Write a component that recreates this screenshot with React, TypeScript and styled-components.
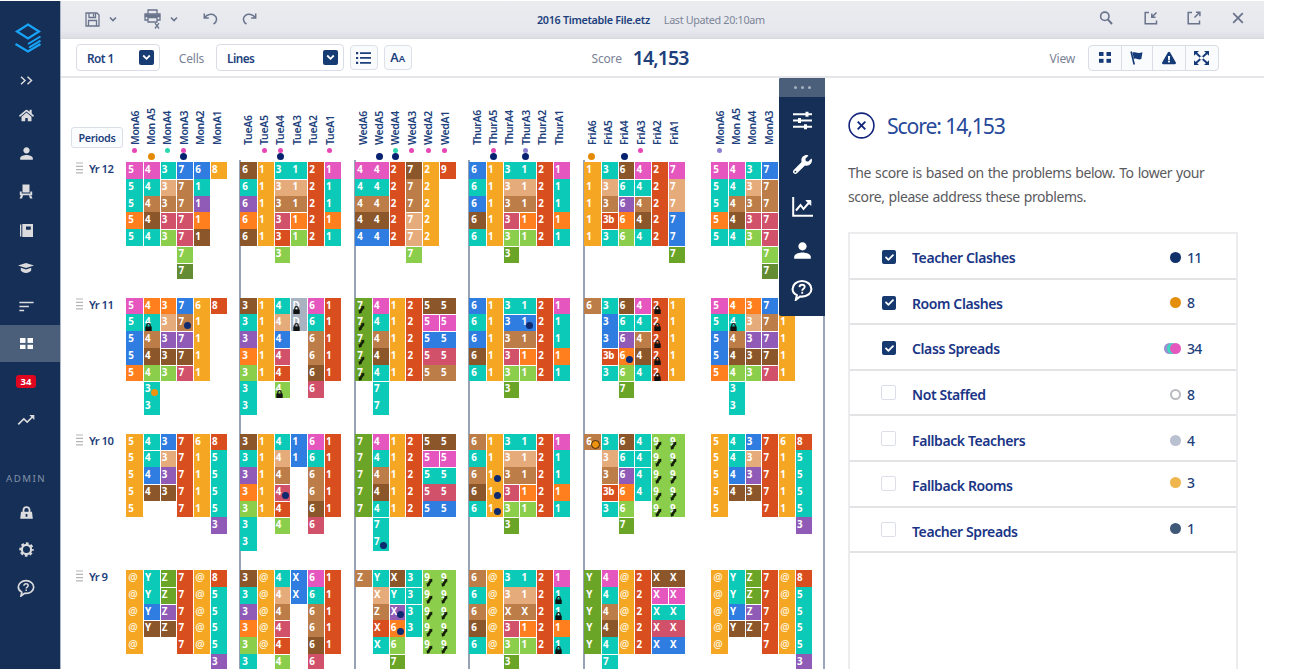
import React from "react";
import styled, { createGlobalStyle, css } from "styled-components";
import { FaHome, FaWrench, FaCheck, FaExclamationTriangle } from "react-icons/fa";
import { MdPerson, MdSort, MdTrendingUp } from "react-icons/md";

const GlobalStyle = createGlobalStyle`
  * { box-sizing: border-box; }
  html, body { margin: 0; padding: 0; background: #fff; }
  body { font-family: "Noto Sans", "Open Sans", sans-serif; overflow: hidden; }
`;

const NAVY = "#152f57";
const INK = "#1d3f7c";
const SLATE = "#4b5f7b";
const MUTED = "#7a8296";

const fills: Record<string, string> = {
  p: "#e557be", t: "#0bcbb8", o: "#ff7f1f", b: "#2f7de1", a: "#f5a623",
  r: "#d94e1f", s: "#e6ab7b", n: "#bc7d49", d: "#8b572a", v: "#8f5bb6",
  c: "#d1506a", g: "#8bce4c", G: "#6aa527", D: "#648d33", e: "#a9b2c1",
};
const dotFills: Record<string, string> = {
  pink: "#e845b5", teal: "#2bd9b0", violet: "#8e7fd0", navy: "#06216f", orange: "#e38b06",
};

/* ---------- shell ---------- */
const Shell = styled.div`
  display: flex;
  width: 1264px;
  height: 669px;
  padding-top: 1px;
  overflow: hidden;
`;
const Sidebar = styled.nav`
  flex: none;
  width: 61px;
  height: 668px;
  background: ${NAVY};
  border-right: 1px solid #aeb6c6;
  display: flex;
  flex-direction: column;
  color: #dcdcde;
`;
const NavItem = styled.div<{ $h: number; $active?: boolean }>`
  flex: none;
  height: ${(p) => p.$h}px;
  padding-right: 8px;
  display: flex;
  align-items: center;
  justify-content: center;
  ${(p) => p.$active && css`background: ${SLATE}; color: #fff;`}
  svg { display: block; }
`;
const Logo = styled(NavItem)`padding: 8px 4px 0 0;`;
const Alert = styled.span`
  background: #e0061f;
  color: #fff;
  border-radius: 3px;
  width: 20px;
  height: 13px;
  font-size: 9.5px;
  font-weight: 700;
  line-height: 13px;
  text-align: center;
`;
const NavHeading = styled.span`
  height: 37px;
  margin-top: 21px;
  padding-left: 6px;
  color: #8391a8;
  font-size: 9.7px;
  letter-spacing: 1.5px;
  line-height: 38px;
`;
const Main = styled.main`flex: 1; min-width: 0; display: flex; flex-direction: column;`;

/* ---------- top bar ---------- */
const TopBar = styled.header`
  flex: none;
  height: 38px;
  display: flex;
  align-items: center;
  padding: 0 18px 1px 24px;
  background: linear-gradient(#ebecf0, #e6e8ed 80%, #dcdee4);
  border-bottom: 1px solid #d7d9df;
  color: #69738c;
  svg { display: block; }
`;
const IconSlot = styled.span<{ $w: number; $up?: boolean }>`
  flex: none;
  width: ${(p) => p.$w}px;
  padding-bottom: ${(p) => (p.$up ? 2 : 0)}px;
  display: flex;
`;
const FileInfo = styled.div`
  flex: 1;
  display: flex;
  gap: 14px;
  padding-left: 272px;
  font-size: 10.8px;
  white-space: nowrap;
`;
const FileName = styled.span`color: ${INK}; font-weight: 600; letter-spacing: -0.32px;`;
const Updated = styled.span`color: #7c8598; letter-spacing: -0.34px;`;

/* ---------- tool bar ---------- */
const ToolBar = styled.div`
  flex: none;
  height: 39px;
  display: flex;
  align-items: center;
  padding: 0 45px 0 15px;
  background: #fff;
  border-bottom: 2px solid #e4e6ea;
  font-size: 12px;
`;
const Select = styled.div<{ $w: number }>`
  width: ${(p) => p.$w}px;
  height: 27px;
  display: flex;
  align-items: center;
  justify-content: space-between;
  padding: 1px 5px 0 10px;
  border: 1px solid #d9dce5;
  border-radius: 4px;
  color: ${INK};
  font-size: 11.8px;
  font-weight: 600;
  letter-spacing: -0.55px;
`;
const SelectArrow = styled.span`
  width: 15px;
  height: 15px;
  margin-top: -1px;
  border-radius: 2px;
  background: #173c73;
  display: flex;
  align-items: center;
  justify-content: center;
`;
const Caption = styled.span<{ $ml?: number; $mr?: number }>`
  color: ${MUTED};
  letter-spacing: -0.2px;
  margin: 2px ${(p) => p.$mr ?? 0}px 0 ${(p) => p.$ml ?? 0}px;
`;
const SquareButton = styled.div`
  width: 28px;
  height: 25px;
  margin-left: 6px;
  border: 1px solid #dde0e8;
  border-radius: 4px;
  background: #fafbfd;
  color: ${INK};
  display: flex;
  align-items: center;
  justify-content: center;
`;
const CaseGlyph = styled.span<{ $s: number }>`font-size: ${(p) => p.$s}px; font-weight: 600;`;
const CasePair = styled.span`display: flex; align-items: baseline; line-height: 16px; padding-top: 2px;`;
const BigScore = styled.span`
  color: ${INK};
  font-size: 19.5px;
  font-weight: 600;
  letter-spacing: -0.9px;
  line-height: 24px;
`;
const ViewGroup = styled.div`
  display: flex;
  height: 26px;
  border: 1px solid #dadde6;
  border-radius: 4px;
  background: #fafbfd;
  color: #153a78;
`;
const ViewButton = styled.div<{ $w: number }>`
  width: ${(p) => p.$w}px;
  display: flex;
  align-items: center;
  justify-content: center;
  & + & { border-left: 1px solid #dadde6; }
`;

/* ---------- timetable ---------- */
const Body = styled.div`flex: 1; display: flex; min-height: 0; position: relative;`;
const Timetable = styled.section`
  flex: none;
  width: 764px;
  display: flex;
  overflow: hidden;
  border-right: 2px solid #9aa5b9;
`;
const LabelColumn = styled.div`flex: none; width: 65px; padding-top: 49px;`;
const PeriodsButton = styled.div`
  width: 52px;
  height: 21px;
  margin: 0 0 13px 10px;
  border: 1px solid #dadee8;
  border-radius: 3px;
  background: #fbfcfe;
  color: ${INK};
  font-size: 10.8px;
  font-weight: 600;
  letter-spacing: -0.38px;
  line-height: 19px;
  text-align: center;
`;
const YearLabel = styled.div<{ $h: number }>`
  height: ${(p) => p.$h}px;
  padding-left: 15px;
  display: flex;
  align-items: flex-start;
  gap: 6px;
  color: ${INK};
  font-size: 11.3px;
  font-weight: 600;
  letter-spacing: -0.6px;
  line-height: 15px;
  svg { flex: none; margin-top: 1px; }
`;
const Day = styled.div<{ $w: number }>`flex: none; width: ${(p) => p.$w}px;`;
const DayHeader = styled.div`
  height: 82px;
  display: flex;
  padding-left: 0.5px;
`;
const PeriodHead = styled.div`
  width: 16.4px;
  height: 82px;
  display: flex;
  flex-direction: column;
  align-items: center;
`;
const PeriodName = styled.span`
  height: 67px;
  writing-mode: vertical-rl;
  transform: rotate(180deg);
  color: ${INK};
  font-size: 10.5px;
  font-weight: 600;
  letter-spacing: -0.35px;
  line-height: 16px;
  white-space: nowrap;
`;
const SmallDot = styled.i<{ $c?: string }>`
  flex: none;
  width: 5px;
  height: 5px;
  margin-top: 3px;
  border-radius: 50%;
  background: ${(p) => p.$c ?? "transparent"};
`;
const LargeDot = styled.i<{ $c: string }>`
  flex: none;
  width: 7px;
  height: 7px;
  border-radius: 50%;
  background: ${(p) => p.$c};
`;
const DayBody = styled.div<{ $line: boolean }>`
  height: 520px;
  padding-top: 2px;
  border-left: ${(p) => (p.$line ? "2px solid #98a2b5" : "0")};
`;
const Block = styled.div<{ $h: number; $pull: boolean }>`
  height: ${(p) => p.$h}px;
  margin-left: ${(p) => (p.$pull ? "-1px" : "0")};
  display: flex;
  align-items: flex-start;
`;
const Column = styled.div`flex: none; width: 16.75px;`;
const Cell = styled.div<{ $fill: string; $left: boolean; $top: boolean; $at: boolean }>`
  position: relative;
  height: 16.75px;
  padding-left: ${(p) => (p.$left ? 1.2 : 2.2)}px;
  background: ${(p) => p.$fill};
  border: 0 solid #fff;
  border-left-width: ${(p) => (p.$left ? 1 : 0)}px;
  border-top-width: ${(p) => (p.$top ? 1 : 0)}px;
  color: ${(p) => (p.$at ? "#fff0d2" : "#fff")};
  font-size: ${(p) => (p.$at ? 10.5 : 9.8)}px;
  font-weight: ${(p) => (p.$at ? 600 : 700)};
  line-height: ${(p) => (p.$top ? 13 : 15)}px;
  letter-spacing: -0.3px;
  white-space: nowrap;
`;
const ClashDot = styled.i<{ $kind: "N" | "O" | "Q" }>`
  position: absolute;
  left: 7px;
  bottom: 2px;
  width: 7px;
  height: 7px;
  border-radius: 50%;
  background: ${(p) => (p.$kind === "N" ? "#0f2a6e" : "#ee9310")};
  ${(p) => p.$kind === "Q" && css`border: 1.5px solid #4a2c0c; width: 9px; height: 9px; bottom: 1px;`}
`;
const Mark = styled.svg<{ $x: number }>`position: absolute; left: ${(p) => p.$x}px; bottom: 0;`;

/* ---------- floating tools ---------- */
const ToolDock = styled.aside`
  position: absolute;
  left: 718px;
  top: 0;
  width: 46px;
  height: 238px;
  background: ${NAVY};
  border-radius: 2px 0 0 2px;
  color: #fff;
  display: flex;
  flex-direction: column;
  svg { display: block; }
`;
const DockHandle = styled.div`
  height: 19px;
  background: ${SLATE};
  border-radius: 2px 0 0 0;
  display: flex;
  align-items: center;
  justify-content: center;
  gap: 4px;
  i { width: 3px; height: 3px; border-radius: 50%; background: #a6b1c1; }
`;
const DockItem = styled.div<{ $h: number }>`
  height: ${(p) => p.$h}px;
  display: flex;
  align-items: center;
  justify-content: center;
`;

/* ---------- score panel ---------- */
const Panel = styled.section`
  flex: 1;
  padding: 33px 26px 0 23px;
  display: flex;
  flex-direction: column;
`;
const PanelTitle = styled.h1`
  margin: 0;
  height: 28px;
  display: flex;
  align-items: center;
  gap: 12px;
  color: #27499a;
  font-size: 21.2px;
  font-weight: 400;
  letter-spacing: -1.12px;
  line-height: 24px;
  white-space: nowrap;
`;
const TitleText = styled.span`padding-top: 1px;`;
const Intro = styled.p`
  margin: 22px 0 24px;
  color: #5a5a5e;
  font-size: 14px;
  line-height: 23.5px;
  letter-spacing: -0.42px;
  word-spacing: 0.8px;
  white-space: nowrap;
`;
const Problems = styled.div`
  flex: 1;
  width: 390px;
  border: 1px solid #ececef;
  border-width: 2px 2px 0;
`;
const Problem = styled.div`
  height: 45.6px;
  display: flex;
  align-items: center;
  padding: 4px 0 0 31px;
  border-bottom: 2px solid #e3e3e5;
`;
const CheckBox = styled.span<{ $on: boolean }>`
  width: ${(p) => (p.$on ? 14 : 15)}px;
  height: ${(p) => (p.$on ? 14 : 15)}px;
  margin: ${(p) => (p.$on ? "0 16px 1px 1px" : "0 16px 4px 0")};
  display: flex;
  align-items: center;
  justify-content: center;
  color: #fff;
  border-radius: 2px;
  background: ${(p) => (p.$on ? "#163a70" : "#fff")};
  border: ${(p) => (p.$on ? "0" : "1px solid #dcdfe9")};
`;
const ProblemName = styled.span`
  flex: 1;
  color: #1a3586;
  font-size: 14px;
  font-weight: 600;
  letter-spacing: -0.4px;
`;
const Tally = styled.span<{ $lift: number }>`
  display: flex;
  align-items: center;
  padding-bottom: ${(p) => p.$lift}px;
`;
const Dots = styled.span`
  display: flex;
  width: 28px;
  justify-content: flex-end;
  margin-right: 6px;
`;
const Dot = styled.i<{ $c: string; $ring?: boolean }>`
  width: 11px;
  height: 11px;
  margin-left: -8px;
  border-radius: 50%;
  background: ${(p) => (p.$ring ? "#fff" : p.$c)};
  border: ${(p) => (p.$ring ? "2px solid " + p.$c : "0")};
`;
const Count = styled.span`
  width: 49px;
  color: ${INK};
  font-size: 14px;
  font-weight: 500;
  letter-spacing: -0.7px;
`;

/* ---------- data ---------- */
/* A cell is a fill letter, its text, then optional marks after ":"
   ^ rule above, ~ joined to the left, L lock, S substitute, N/O/Q clash dots. */
type Grid = string[];
const five = (s: string) => Array(5).fill(s).join(" ");

const mon12: Grid = ["p5 t5 t5 o5 t5", "p4 t4 n4 d4 t4", "t3 s3:^ n3 c3:^ g3:^", "b7 n7:^ n7 c7:^ c7:^ g7:^ D7:^", "b6 t1 v1 o1 d1", "a8"];
const mon11 = (dots: boolean): Grid => [
  "p5 t5 b5 b5 o5", `o4 t4:L n4 d4 g4 t3:^${dots ? "O" : ""} t3`, "o3 s3 v3:^ d3:^ g3:^",
  `b7 n7${dots ? ":N" : ""} v7:^ d7:^ c7:^`, "a6 a1 a1 a1 a1", "r8"];
const mon10: Grid = [five("a5"), "t4 t4:^ b4 d4:^", "b3 s3:^ v3 d3:^", five("r7"), "a6 a1 a1 a1 a1", "r8 t5 t5 t5 t5 v3"];
const mon9: Grid = [five("a@"), "tY tY bY dY:^", "GZ GZ:^ vZ:^ dZ:^", five("r7"), five("a@"), "r8 t5 t5 t5 t5 v3"];
const tueC1 = "d3 t3 v3 o3 g3 t3";
const tueC5 = "p6 t6 n6 n6 d6 c6";
const thuC6 = "p1 t1 t1 o1 t1";

interface Head { name: string; small?: string; large?: string }
interface DayData { id: string; width: number; line: boolean; heads: Head[]; years: Grid[] }

const days: DayData[] = [
  {
    id: "mon", width: 113, line: false,
    heads: [{ name: "MonA6", small: "pink" }, { name: "Mon A5", large: "orange" }, { name: "MonA4", small: "teal" },
      { name: "MonA3", small: "pink", large: "navy" }, { name: "MonA2" }, { name: "MonA1" }],
    years: [mon12, mon11(true), mon10, mon9],
  },
  {
    id: "tue", width: 115, line: true,
    heads: [{ name: "TueA6" }, { name: "TueA5", small: "pink" }, { name: "TueA4", small: "pink", large: "navy" },
      { name: "TueA3" }, { name: "TueA2" }, { name: "TueA1", small: "pink" }],
    years: [
      ["d6 t6 v6 o6 d6", five("a1"), "t3 s3:^ n3 c3:^ r3:^ g3:^", "t1:~ s1:~^ n1:~ o1:^ g1:^", five("r2"), thuC6],
      [`${tueC1} t3`, five("a1"), "t4 s4 b4 c4:^ r4:^ g4:^L", "eD:L eD:L", tueC5, five("r1")],
      [`${tueC1} t3`, five("a1"), "t4 s4 n4 c4:^N r4:^ g4:^", "b1 b1", tueC5, five("r1")],
      [tueC1, five("a@"), "t4 s4 n4 c4:^ r4:^ g4:^", "bX bX", tueC5, five("r1")],
    ],
  },
  {
    id: "wed", width: 114, line: true,
    heads: [{ name: "WedA6" }, { name: "WedA5", large: "navy" }, { name: "WedA4", small: "teal", large: "navy" },
      { name: "WedA3", small: "pink" }, { name: "WedA2", small: "pink" }, { name: "WedA1", small: "pink" }],
    years: [
      ["p4 t4 n4 d4 b4", "p4:~ t4:~ n4:~ d4:~ b4:~", five("r2"), "d7 n7 n7 s7:^ s7:^ g7:^", five("a2"), "r9"],
      [five("G7:S"), "p4 t4 n4 d4 t4 t7:^ t7", five("a1"), five("r2"), "d5 p5:^ b5:^ c5 n5", "d5:~ p5:^ b5:~^ c5:~ n5:~"],
      [five("G7"), "p4 t4 n4 d4 t4 t7:^ t7:N", five("a1"), five("r2"), "d5 p5:^ t5:^ c5 b5", "d5:~ p5:^ t5:~^ c5:~ b5:~"],
      ["nZ", "tY sX nZ rX tX", "dX tY:^ vX:^N o6:N g6 G7:^", "t3 t3:^ t3:^ t3", five("g9:S"), five("g9:~S")],
    ],
  },
  {
    id: "thu", width: 115, line: true,
    heads: [{ name: "ThurA6" }, { name: "ThurA5", small: "pink", large: "navy" }, { name: "ThurA4" },
      { name: "ThurA3", small: "violet", large: "navy" }, { name: "ThurA2" }, { name: "ThurA1" }],
    years: [
      ["b6 t6 b6 d6 t6", five("a1"), "t3 s3 n3 c3:^ g3:^ G3:^", "t1:~ s1:~ n1:~ o1:^ g1:^", five("r2"), thuC6],
      ["b6 t6 b6 d6 t6", five("a1"), "t3 b3:^ n3 c3:^ g3:^ G3:^", "t1:~ b1:~^N n1:~ o1:^ g1:^", five("r2"), thuC6],
      ["n6 t6 n6 d6 t6", "a1 a1 a1:N a1:N a1:N", "t3 s3:^ n3 c3:^ g3:^ G3:^", "t1:~ s1:~^ n1:~ o1:^ g1:^", five("r2"), thuC6],
      ["n6 t6 n6 d6 t6", five("a@"), "t3 s3 nX c3:^ g3:^ G3:^", "t1:~ s1:~ nX:~ o1:^ g1:^", five("r2"), "p1 t1:L t1:L o1 t1:L"],
    ],
  },
  {
    id: "fri", width: 128, line: true,
    heads: [{ name: "FriA6", large: "orange" }, { name: "FriA5" }, { name: "FriA4", large: "navy" },
      { name: "FriA3", small: "pink" }, { name: "FriA2" }, { name: "FriA1" }],
    years: [
      [five("a1"), "t3 s3 n3 r3b:^ t3:^", "d6 t6:^ v6:^ o6 g6", "p4 t4:^ n4:^ d4 t4", five("r2"), "p7 s7 s7 b7 b7 G7:^"],
      ["n6", "t3 b3 b3 r3b:^ t3:^", "d6 t6:^ v6:^ o6:N g6 G7:^", "p4 t4:^ n4:^ d4 t4", five("r2:L"), five("a1")],
      ["n6:Q", "t3 s3 n3 r3b:^ t3:^", "d6 t6:^ v6:^ o6 g6 G7:^", "t4 t4:^ t4:^ t4", five("g9:S"), five("g9:~S")],
      [five("GY"), "p4 t4 n4 d4 t4 t7:^", five("a@"), five("r2"), "dX pX:^ tX:^ cX bX", "dX:~ pX:^ tX:~^ cX:~ bX:~"],
    ],
  },
  {
    id: "mon-b", width: 114, line: false,
    heads: [{ name: "MonA6", small: "violet" }, { name: "Mon A5" }, { name: "MonA4" }, { name: "MonA3" }],
    years: [mon12.slice(0, 4), mon11(false).slice(0, 5), mon10, mon9],
  },
];
const yearHeights = [135.5, 136, 136.5, 136];
const yearNames = ["Yr 12", "Yr 11", "Yr 10", "Yr 9"];

const problems = [
  { name: "Teacher Clashes", on: true, dots: ["#12306a"], count: 11, lift: 1 },
  { name: "Room Clashes", on: true, dots: ["#e38f0c"], count: 8, lift: 1 },
  { name: "Class Spreads", on: true, dots: ["#9a8fd0", "#3fd8c0", "#e657bd"], count: 34, lift: 1 },
  { name: "Not Staffed", on: false, dots: ["#b9bbc0"], ring: true, count: 8, lift: 0 },
  { name: "Fallback Teachers", on: false, dots: ["#b9c0d0"], count: 4, lift: 0 },
  { name: "Fallback Rooms", on: false, dots: ["#f0b64e"], count: 3, lift: 7 },
  { name: "Teacher Spreads", on: false, dots: ["#3f5878"], count: 1, lift: 5 },
];

/* ---------- icons ---------- */
const stroke = { fill: "none", stroke: "currentColor" } as const;
const Chevron = ({ w = 8, s = 1.6 }: { w?: number; s?: number }) => (
  <svg width={w} height={w} viewBox="0 0 8 8" {...stroke} strokeWidth={s}><path d="M1 2.5 4 5.5 7 2.5" /></svg>
);
const LogoIcon = () => (
  <svg width="28" height="32" viewBox="0 0 28 32" fill="none" stroke="#18a4f8" strokeWidth="2.2">
    <path d="M14 2.500 25 9.500 14 16.500 3 9.500z" />
    <path d="M1.500 22 14 29.500 26.500 22" />
    <path d="M14 22 26.500 14.500M15 25.700 26.500 18.700" strokeWidth="2" />
  </svg>
);
const ChairIcon = () => (
  <svg width="14" height="15" viewBox="0 0 14 15" fill="currentColor">
    <path d="M3.500.5h7v8h-7zM.8 7.500h1.900v2h8.600v-2h1.900v3.700H.8zM2 11h2.200L3 14.500H.5zM12 11H9.800l1.200 3.500h2.500z" />
  </svg>
);
const BookIcon = () => (
  <svg width="13" height="13" viewBox="0 0 13 13" fill="currentColor">
    <path d="M0 .5h1.300v12H0zM2.300 0H13v13H2.300zM6 2.600v3.200h4.800V2.600z" fillRule="evenodd" />
  </svg>
);
const CapIcon = () => (
  <svg width="16" height="10" viewBox="0 0 16 10" fill="currentColor">
    <path d="M8 0 16 2.600 8 5 0 2.600zM2.800 4.800 8 6.400l5.200-1.600v2.800C12 9.300 10.200 10 8 10s-4-.7-5.200-2.400z" />
  </svg>
);
const GridIcon = ({ s = 13, q = 5.5 }: { s?: number; q?: number }) => (
  <svg width={s} height={s * 0.9} viewBox="0 0 13 11.7" fill="currentColor">
    <rect width={q} height={q - 0.6} /><rect x={13 - q} width={q} height={q - 0.6} />
    <rect y={12.3 - q} width={q} height={q - 0.6} /><rect x={13 - q} y={12.3 - q} width={q} height={q - 0.6} />
  </svg>
);
const LockIcon = () => (
  <svg width="13" height="13" viewBox="0 0 13 13">
    <path d="M3.500 6.500V4.100a3 3 0 0 1 6 0v2.400" {...stroke} strokeWidth="1.800" />
    <path d="M1 5.700h11l.8 7.100H.2zM5.600 7.900v2.800h1.800V7.900z" fill="currentColor" fillRule="evenodd" />
  </svg>
);
const GearIcon = () => (
  <svg width="15" height="15" viewBox="0 0 16 16" {...stroke}>
    <circle cx="8" cy="8" r="4.900" strokeWidth="2.300" />
    <circle cx="8" cy="8" r="6.500" strokeWidth="2.400" strokeDasharray="2.900 2.205" strokeDashoffset="1.450" />
  </svg>
);
const HelpIcon = ({ s = 18 }: { s?: number }) => (
  <svg width={s} height={s} viewBox="0 0 18 18" {...stroke} strokeWidth="1.700">
    <path d="M4.800 13.200C2.600 12.100 1.300 10.200 1.300 8.100c0-3.600 3.400-6.400 7.700-6.400s7.700 2.800 7.700 6.400-3.400 6.300-7.700 6.300c-.5 0-1 0-1.500-.1L4 17z" />
    <path d="M6.900 6.700C7 5.400 7.900 4.700 9.100 4.700s2.100.7 2.100 1.800c0 1.500-2 1.600-2 3.100M9.200 10.500v1.500" strokeWidth="1.500" />
  </svg>
);
const SaveIcon = () => (
  <svg width="15" height="15" viewBox="0 0 15 15" {...stroke} strokeWidth="1.300">
    <path d="M1 1h11l2 2v11H1zM4 1v4.500h6.500V1M8.500 2v2.500M3.500 14V8.500h8V14" />
  </svg>
);
const PrintIcon = () => (
  <svg width="17" height="20" viewBox="0 0 17 20" {...stroke} strokeWidth="1.300">
    <path d="M4 5V1h9v4M4 11H1V5h15v6h-3" />
    <path d="M1.500 6h14v1.500h-14z" fill="currentColor" />
    <path d="M4 8.500h9V13H4z M11 14.200l4 5.300M15 14.200l-4 5.300" />
  </svg>
);
const UndoIcon = ({ flip }: { flip?: boolean }) => (
  <svg width="15" height="14" viewBox="0 0 15 14" {...stroke} strokeWidth="1.500" transform={flip ? "scale(-1 1)" : undefined}>
    <path d="M1.300 1.500V6h4.500M1.500 5.800C4 2.500 8.500 1.200 11.500 3.300s2.800 6.500-1 8.700" />
  </svg>
);
const SearchIcon = () => (
  <svg width="14" height="14" viewBox="0 0 14 14" {...stroke} strokeWidth="1.600">
    <circle cx="5.800" cy="5.300" r="4.200" /><path d="M8.800 8.400 13 13" strokeWidth="2" />
  </svg>
);
const BoxIcon = ({ out }: { out?: boolean }) => (
  <svg width="14" height="14" viewBox="0 0 14 14" {...stroke} strokeWidth="1.500">
    <path d="M5 1.500H1.200v11.300h11.300V9.500" />
    <path d={out ? "M7.500 6.500 12.500 1.500M9 1.200h3.900v4" : "M12.500 1.500 8 6M7.800 2.600v3.600h3.700"} />
  </svg>
);
const CloseIcon = ({ s = 10, w = 1.5 }: { s?: number; w?: number }) => (
  <svg width={s} height={s} viewBox="0 0 10 10" {...stroke} strokeWidth={w}><path d="M1 1l8 8M9 1 1 9" /></svg>
);
const ListIcon = () => (
  <svg width="15" height="12" viewBox="0 0 15 12" fill="currentColor">
    <path d="M0 0h2.200v2.200H0zM4 .2h11v1.700H4zM0 4.900h2.200v2.200H0zM4 5.100h11v1.700H4zM0 9.800h2.200V12H0zM4 10h11v1.700H4z" />
  </svg>
);
const FlagIcon = () => (
  <svg width="13" height="14" viewBox="0 0 13 14" fill="currentColor">
    <path d="M.3.800 1.900.3 5 13.200l-1.600.5zM2.500 1.600C5 .2 6.500 3.200 12.500 1.300L11.300 8C8 9.500 6.500 6.600 4 8z" />
  </svg>
);
const ExpandIcon = () => (
  <svg width="15" height="14" viewBox="0 0 15 14">
    <path d="M2 2 13 12M13 2 2 12" stroke="currentColor" strokeWidth="1.900" />
    <path d="M0 0h5L0 4.700zM15 0h-5l5 4.700zM0 14h5L0 9.300zM15 14h-5l5-4.700z" fill="currentColor" />
    <circle cx="7.500" cy="7" r="1.800" fill="#fafbfd" />
  </svg>
);
const SlidersIcon = () => (
  <svg width="19" height="19" viewBox="0 0 19 19" stroke="currentColor" fill="none">
    <path d="M0 3.300h19M0 9.500h19M0 15.700h19" strokeWidth="2" />
    <path d="M14 .8v5M6.500 7v5M12.500 13.200v5" strokeWidth="3" />
  </svg>
);
const ChartIcon = () => (
  <svg width="21" height="20" viewBox="0 0 21 20" {...stroke} strokeWidth="2">
    <path d="M1.200 0v18.700H21" /><path d="M4 13.500 8.500 8l3 4L18 4.500" />
    <path d="M14 3.500h4.800v4.800z" fill="currentColor" strokeWidth="1" />
  </svg>
);
const Grip = () => (
  <svg width="7" height="12" viewBox="0 0 7 12" stroke="#b5b5b8" strokeWidth="1.200"><path d="M0 1h7M0 4.300h7M0 7.600h7M0 10.900h7" /></svg>
);

/* ---------- cells ---------- */
const PeriodCell = ({ token, first }: { token: string; first: boolean }) => {
  const [body, marks = ""] = token.split(":");
  const text = body.slice(1);
  const has = (m: string) => marks.includes(m);
  return (
    <Cell $fill={fills[body[0]]} $left={!first && !has("~")} $top={has("^")} $at={text === "@"}>
      {text}
      {has("L") && (
        <Mark $x={1.5} width="7" height="8" viewBox="0 0 7 8">
          <path d="M1.800 4V2.400a1.700 1.700 0 0 1 3.400 0V4" fill="none" stroke="#111" strokeWidth="1.200" />
          <path d="M.3 3.500h6.400V8H.3z" fill="#111" />
        </Mark>
      )}
      {has("S") && (
        <Mark $x={2.5} width="7" height="9" viewBox="0 0 7 9">
          <path d="M2 7 4.800 2.600" stroke="#14200a" strokeWidth="2.600" />
          <path d="M.5 5 4 7.800 1 8.800zM2.600 1.600 6.300.8 6.200 4.200z" fill="#14200a" />
        </Mark>
      )}
      {has("N") && <ClashDot $kind="N" />}
      {has("O") && <ClashDot $kind="O" />}
      {has("Q") && <ClashDot $kind="Q" />}
    </Cell>
  );
};

const DayView = ({ day }: { day: DayData }) => (
  <Day $w={day.width}>
    <DayHeader>
      {day.heads.map((h) => (
        <PeriodHead key={h.name}>
          <PeriodName>{h.name}</PeriodName>
          <SmallDot $c={h.small && dotFills[h.small]} />
          {h.large && <LargeDot $c={dotFills[h.large]} />}
        </PeriodHead>
      ))}
    </DayHeader>
    <DayBody $line={day.line}>
      {day.years.map((grid, y) => (
        <Block key={y} $h={yearHeights[y]} $pull={day.line}>
          {grid.map((col, c) => (
            <Column key={c}>
              {col.split(" ").map((t, r) => <PeriodCell key={r} token={t} first={c === 0} />)}
            </Column>
          ))}
        </Block>
      ))}
    </DayBody>
  </Day>
);

const DropArrow = () => (
  <SelectArrow>
    <svg width="9" height="7" viewBox="0 0 9 7" fill="none" stroke="#fff" strokeWidth="1.800"><path d="M1.200 1.500 4.500 4.800 7.800 1.500" /></svg>
  </SelectArrow>
);

export default function App() {
  return (
    <Shell>
      <GlobalStyle />
      <Sidebar>
        <Logo $h={66}><LogoIcon /></Logo>
        <NavItem $h={27}>
          <svg width="13" height="9" viewBox="0 0 13 9" {...stroke} strokeWidth="1.500"><path d="M1 .8 5 4.500 1 8.200M7.500.8l4 3.700-4 3.700" /></svg>
        </NavItem>
        <NavItem $h={42}><FaHome size={15} /></NavItem>
        <NavItem $h={34}><MdPerson size={19} /></NavItem>
        <NavItem $h={42}><ChairIcon /></NavItem>
        <NavItem $h={36}><BookIcon /></NavItem>
        <NavItem $h={40}><CapIcon /></NavItem>
        <NavItem $h={37}><MdSort size={19} /></NavItem>
        <NavItem $h={37} $active><GridIcon /></NavItem>
        <NavItem $h={38}><Alert>34</Alert></NavItem>
        <NavItem $h={39}><MdTrendingUp size={20} /></NavItem>
        <NavHeading>ADMIN</NavHeading>
        <NavItem $h={30}><LockIcon /></NavItem>
        <NavItem $h={44}><GearIcon /></NavItem>
        <NavItem $h={34}><HelpIcon /></NavItem>
      </Sidebar>
      <Main>
        <TopBar>
          <IconSlot $w={24}><SaveIcon /></IconSlot>
          <IconSlot $w={35}><Chevron /></IconSlot>
          <IconSlot $w={26}><PrintIcon /></IconSlot>
          <IconSlot $w={33}><Chevron /></IconSlot>
          <IconSlot $w={39}><UndoIcon /></IconSlot>
          <IconSlot $w={23}><UndoIcon flip /></IconSlot>
          <FileInfo>
            <FileName>2016 Timetable File.etz</FileName>
            <Updated>Last Upated 20:10am</Updated>
          </FileInfo>
          <IconSlot $w={45} $up><SearchIcon /></IconSlot>
          <IconSlot $w={43} $up><BoxIcon /></IconSlot>
          <IconSlot $w={45} $up><BoxIcon out /></IconSlot>
          <IconSlot $w={14} $up><CloseIcon s={12} /></IconSlot>
        </TopBar>
        <ToolBar>
          <Select $w={84}>Rot 1<DropArrow /></Select>
          <Caption $ml={19} $mr={12}>Cells</Caption>
          <Select $w={128}>Lines<DropArrow /></Select>
          <SquareButton><ListIcon /></SquareButton>
          <SquareButton><CasePair><CaseGlyph $s={12.5}>A</CaseGlyph><CaseGlyph $s={9.5}>A</CaseGlyph></CasePair></SquareButton>
          <Caption $ml={180} $mr={11}>Score</Caption>
          <BigScore>14,153</BigScore>
          <Caption $ml={361} $mr={13}>View</Caption>
          <ViewGroup>
            <ViewButton $w={32}><GridIcon s={12} q={4.9} /></ViewButton>
            <ViewButton $w={31}><FlagIcon /></ViewButton>
            <ViewButton $w={33}><FaExclamationTriangle size={14} /></ViewButton>
            <ViewButton $w={33}><ExpandIcon /></ViewButton>
          </ViewGroup>
        </ToolBar>
        <Body>
          <Timetable>
            <LabelColumn>
              <PeriodsButton>Periods</PeriodsButton>
              {yearNames.map((n, i) => <YearLabel key={n} $h={yearHeights[i]}><Grip />{n}</YearLabel>)}
            </LabelColumn>
            {days.map((d) => <DayView key={d.id} day={d} />)}
          </Timetable>
          <Panel>
            <PanelTitle>
              <svg width="27" height="27" viewBox="0 0 27 27" fill="none" stroke="#14267c">
                <circle cx="13.500" cy="13.500" r="12.400" strokeWidth="1.600" />
                <path d="M9.700 9.700l7.600 7.600M17.300 9.700l-7.600 7.600" strokeWidth="1.900" />
              </svg>
              <TitleText>Score: 14,153</TitleText>
            </PanelTitle>
            <Intro>The score is based on the problems below. To lower your<br />score, please address these problems.</Intro>
            <Problems>
              {problems.map((p) => (
                <Problem key={p.name}>
                  <CheckBox $on={p.on}>{p.on && <FaCheck size={9} />}</CheckBox>
                  <ProblemName>{p.name}</ProblemName>
                  <Tally $lift={p.lift}>
                    <Dots>{p.dots.map((c) => <Dot key={c} $c={c} $ring={p.ring} />)}</Dots>
                    <Count>{p.count}</Count>
                  </Tally>
                </Problem>
              ))}
            </Problems>
          </Panel>
          <ToolDock>
            <DockHandle><i /><i /><i /></DockHandle>
            <DockItem $h={46}><SlidersIcon /></DockItem>
            <DockItem $h={42}><FaWrench size={19} /></DockItem>
            <DockItem $h={44}><ChartIcon /></DockItem>
            <DockItem $h={42}><MdPerson size={25} /></DockItem>
            <DockItem $h={38}><HelpIcon s={22} /></DockItem>
          </ToolDock>
        </Body>
      </Main>
    </Shell>
  );
}
